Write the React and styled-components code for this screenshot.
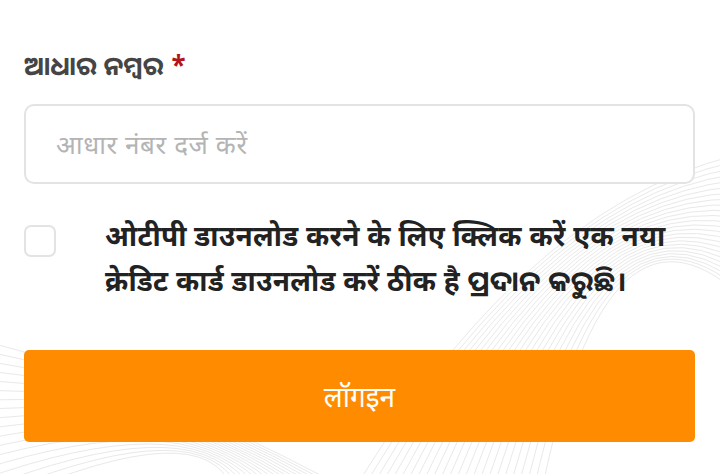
import React from "react";
import styled, { createGlobalStyle } from "styled-components";

const GlobalStyle = createGlobalStyle`
  html, body {
    margin: 0;
    padding: 0;
    background: #fff;
  }
  body {
    font-family: "Noto Sans", "Noto Sans Devanagari", "Noto Sans Oriya", "Lohit Devanagari", "Lohit Odia", sans-serif;
  }
`;

const Page = styled.div`
  position: relative;
  width: 720px;
  height: 474px;
  overflow: hidden;
  background: #fff;
`;

const Waves = styled.svg`
  position: absolute;
  inset: 0;
  pointer-events: none;
`;

const Form = styled.form`
  position: relative;
  display: flex;
  flex-direction: column;
  padding: 47px 25px 0 24px;
`;

const Label = styled.label`
  font-size: 26px;
  font-weight: 700;
  color: #454545;
  line-height: 36px;
  span {
    color: #b3141c;
    margin-left: 8px;
  }
`;

const Input = styled.input`
  margin-top: 21px;
  height: 80px;
  box-sizing: border-box;
  border: 2px solid #e3e3e3;
  border-radius: 10px;
  padding: 0 30px;
  font-family: inherit;
  font-size: 26px;
  letter-spacing: 0.6px;
  color: #333;
  background: #fff;
  outline: none;
  &::placeholder {
    color: #b4b4b4;
  }
`;

const ConsentRow = styled.div`
  display: flex;
  align-items: flex-start;
  gap: 49px;
  margin-top: 38px;
`;

const Box = styled.input.attrs({ type: "checkbox" })`
  appearance: none;
  flex: none;
  width: 32px;
  height: 32px;
  margin: 3px 0 0;
  box-sizing: border-box;
  border: 2px solid #e3e3e3;
  border-radius: 7px;
  background: #fff;
`;

const ConsentText = styled.p`
  margin: -9px 0 0;
  font-size: 28px;
  font-weight: 700;
  line-height: 45px;
  letter-spacing: 0.3px;
  color: #222;
`;

const LoginButton = styled.button`
  margin-top: 47px;
  height: 92px;
  border: none;
  border-radius: 5px;
  background: #ff8c00;
  color: #fff;
  font-family: inherit;
  font-size: 28px;
  font-weight: 400;
`;

function Background() {
  const right = [];
  for (let i = 0; i < 24; i++) {
    const o = i * 8;
    right.push(
      <path
        key={"r" + i}
        d={`M ${360 + o} 480 Q ${540 + o * 0.4} ${190 - o * 0.2} ${760} ${150 + o * 0.9}`}
      />
    );
  }
  const left = [];
  for (let i = 0; i < 18; i++) {
    const o = i * 10;
    left.push(
      <path
        key={"l" + i}
        d={`M -20 ${340 + o} Q ${140 + o * 0.3} ${380 + o * 0.2} ${330 - o * 0.6} 480`}
      />
    );
  }
  return (
    <Waves width="720" height="474" viewBox="0 0 720 474">
      <g fill="none" stroke="#e9e9e9" strokeWidth="1">
        {right}
        {left}
      </g>
    </Waves>
  );
}

export default function App() {
  return (
    <Page>
      <GlobalStyle />
      <Background />
      <Form onSubmit={(e) => e.preventDefault()}>
        <Label htmlFor="aadhaar">
          ଆଧାର ନମ୍ବର<span>*</span>
        </Label>
        <Input id="aadhaar" placeholder="आधार नंबर दर्ज करें" />
        <ConsentRow>
          <Box />
          <ConsentText>
            ओटीपी डाउनलोड करने के लिए क्लिक करें एक नया क्रेडिट कार्ड डाउनलोड करें ठीक है ପ୍ରଦାନ କରୁଛି।
          </ConsentText>
        </ConsentRow>
        <LoginButton type="submit">लॉगइन</LoginButton>
      </Form>
    </Page>
  );
}
